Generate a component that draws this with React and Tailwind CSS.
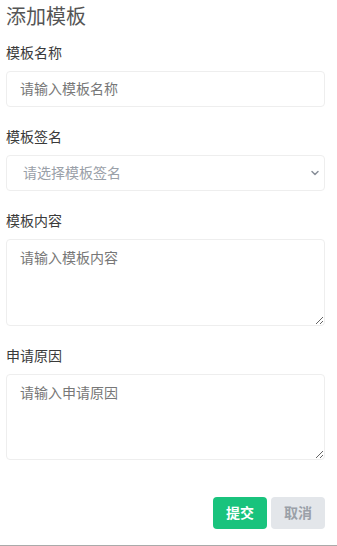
import { ChevronDown } from 'lucide-react';

const font = { fontFamily: '"Liberation Sans", "Noto Sans CJK SC", sans-serif' };

function Field({ label, children, className = '' }) {
  return (
    <div className={className}>
      <label className="block text-sm leading-5 text-[#3a3a3a] mb-2">{label}</label>
      {children}
    </div>
  );
}

export default function App() {
  return (
    <div
      className="h-[546px] w-[337px] bg-white flex flex-col border-b border-[#aaa] overflow-hidden"
      style={font}
    >
      <div className="pl-1.5 pr-3 pt-[3px] flex-1">
        <h2 className="text-xl leading-7 text-[#555] mb-3">添加模板</h2>

        {/* Template name */}
        <Field label="模板名称">
          <input
            type="text"
            placeholder="请输入模板名称"
            className="w-full h-[36px] px-[13px] text-sm border border-[#eee] rounded-sm outline-none placeholder:text-[#777]"
          />
        </Field>

        {/* Signature */}
        <Field label="模板签名" className="mt-5">
          <div className="relative">
            <select
              defaultValue=""
              className="w-full h-[36px] pl-4 pr-8 text-sm border border-[#eee] rounded-sm outline-none appearance-none bg-white text-[#9aa0a8]"
            >
              <option value="" disabled>
                请选择模板签名
              </option>
            </select>
            <ChevronDown
              size={12}
              strokeWidth={3}
              className="absolute right-[4px] top-1/2 -translate-y-1/2 text-[#8a909a] pointer-events-none"
            />
          </div>
        </Field>

        {/* Content */}
        <Field label="模板内容" className="mt-5">
          <textarea
            placeholder="请输入模板内容"
            className="block w-full h-[87px] px-[13px] py-2 text-sm border border-[#eee] rounded-sm outline-none placeholder:text-[#777]"
          />
        </Field>

        {/* Reason */}
        <Field label="申请原因" className="mt-5">
          <textarea
            placeholder="请输入申请原因"
            className="block w-full h-[86px] px-[13px] py-2 text-sm border border-[#eee] rounded-sm outline-none placeholder:text-[#777]"
          />
        </Field>

        <div className="flex justify-end gap-1 mt-[37px]">
          <button className="w-[54px] h-8 rounded-sm bg-[#19c37d] text-white text-sm font-bold">
            提交
          </button>
          <button className="w-[54px] h-8 rounded-sm bg-[#e3e6ea] text-[#9aa0a8] text-sm font-bold">
            取消
          </button>
        </div>
      </div>
    </div>
  );
}
